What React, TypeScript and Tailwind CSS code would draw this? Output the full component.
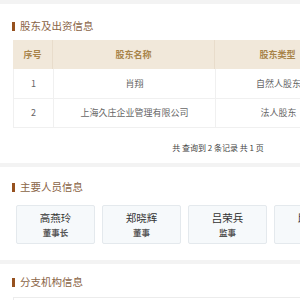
const shareholders = [
  { no: 1, name: '肖翔', type: '自然人股东' },
  { no: 2, name: '上海久庄企业管理有限公司', type: '法人股东' },
]

const people = [
  { name: '高燕玲', role: '董事长' },
  { name: '郑晓辉', role: '董事' },
  { name: '吕荣兵', role: '监事' },
  { name: '邱建华', role: '经理' },
]

function SectionTitle({ text }: { text: string }) {
  return (
    <div className="flex items-center h-[20px] pl-[12px]">
      <span className="w-[3px] h-[9px] bg-[#96511f] mr-[5px]" />
      <span className="text-[10.5px] text-[#8a6446] leading-none">{text}</span>
    </div>
  )
}

export default function App() {
  return (
    <div
      className="w-[300px] h-[300px] overflow-hidden bg-[#f3f3f3]"
      style={{ fontFamily: '"Noto Sans CJK SC", "Noto Sans", sans-serif' }}
    >
      <div className="mt-[4px] bg-white pt-[12px] h-[159px]">
        <SectionTitle text="股东及出资信息" />
        <div className="ml-[13px] mt-[4px] w-[410px]">
          <div className="flex h-[29px] bg-[#f1e8da] text-[9px] font-bold text-[#a8844a]">
            <div className="w-[40px] flex items-center justify-center border-r border-[#e8dccb]">序号</div>
            <div className="w-[162px] flex items-center justify-center border-r border-[#e8dccb]">股东名称</div>
            <div className="w-[126px] flex items-center justify-center border-r border-[#e8dccb]">股东类型</div>
            <div className="flex-1 flex items-center justify-center">出资比例</div>
          </div>
          {shareholders.map(s => (
            <div key={s.no} className="flex h-[29.5px] text-[9px] text-[#666] border-b border-l border-[#f0f0f0]">
              <div className="w-[40px] flex items-center justify-center border-r border-[#f0f0f0]">{s.no}</div>
              <div className="w-[162px] flex items-center justify-center border-r border-[#f0f0f0]">{s.name}</div>
              <div className="w-[126px] flex items-center justify-center border-r border-[#f0f0f0]">{s.type}</div>
              <div className="flex-1 flex items-center justify-center">-</div>
            </div>
          ))}
          <div className="mt-[13px] text-center text-[8px] text-[#444] leading-[14px]">
            共 查询到 2 条记录 共 1 页
          </div>
        </div>
      </div>

      <div className="mt-[4px] bg-white pt-[10px] h-[93px]">
        <SectionTitle text="主要人员信息" />
        <div className="flex gap-[7px] pl-[16px] mt-[8px]">
          {people.map(p => (
            <div
              key={p.name}
              className="w-[79px] h-[39px] shrink-0 flex flex-col items-center justify-center bg-[#f6f9fb] border border-[#e4e9ed] rounded-[2px]"
            >
              <span className="text-[10.5px] text-[#333] leading-[14px]">{p.name}</span>
              <span className="text-[8.5px] text-[#555] font-bold leading-[13px] mt-[1px]">{p.role}</span>
            </div>
          ))}
        </div>
      </div>

      <div className="mt-[4px] bg-white pt-[8px] h-[60px]">
        <SectionTitle text="分支机构信息" />
        <div className="ml-[13px] mt-[5px] w-[410px] h-[20px] border-t border-l border-[#ececec]" />
      </div>
    </div>
  )
}
